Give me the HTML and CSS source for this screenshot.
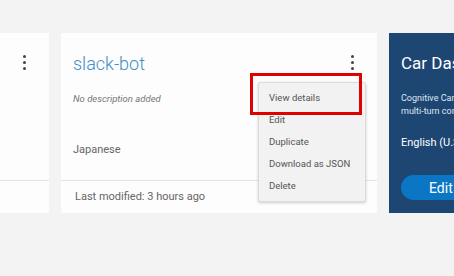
FILE: index.html
```html
<!DOCTYPE html>
<html lang="en">
<head>
    <meta charset="UTF-8">
    <title>Workspaces</title>
    <link rel="stylesheet" href="styles.css">
</head>
<body>
    <div class="row">
        <div class="card">
            <div class="card-body">
                <div class="card-head">
                    <span class="title"></span>
                    <span class="kebab"><i></i><i></i><i></i></span>
                </div>
            </div>
            <div class="card-foot"></div>
        </div>

        <div class="card">
            <div class="card-body">
                <div class="card-head">
                    <span class="title">slack-bot</span>
                    <span class="kebab"><i></i><i></i><i></i></span>
                </div>
                <p class="desc">No description added</p>
                <p class="lang">Japanese</p>
            </div>
            <div class="card-foot">Last modified: 3 hours ago</div>

            <ul class="menu">
                <li>View details</li>
                <li>Edit</li>
                <li>Duplicate</li>
                <li>Download as JSON</li>
                <li>Delete</li>
            </ul>
            <div class="highlight"></div>
        </div>

        <div class="card dark">
            <div class="card-body">
                <div class="card-head">
                    <span class="title">Car Dashboard - Sample</span>
                </div>
                <p class="desc">Cognitive Car Dashboard sample: a multi-turn conversation</p>
                <p class="lang">English (U.S.)</p>
                <button class="edit">Edit</button>
            </div>
        </div>
    </div>
</body>
</html>
```

FILE: styles.css
```css
body {
    margin: 0;
    background: #f3f3f3;
    font-family: Roboto, "Liberation Sans", sans-serif;
    overflow: hidden;
}
.row {
    display: flex;
    gap: 12px;
    margin-left: -267px;
    padding-top: 33px;
}
.card {
    position: relative;
    flex: 0 0 316px;
    height: 180px;
    background: #fdfdfd;
    display: flex;
    flex-direction: column;
}
.card-body {
    height: 147px;
    padding: 0 12px;
    border-bottom: 1px solid #e4e4e4;
}
.card-head {
    display: flex;
    justify-content: space-between;
    align-items: flex-start;
    height: 44px;
    padding-top: 20px;
    box-sizing: border-box;
}
.title {
    font-size: 18px;
    font-weight: 300;
    color: #3f8fc4;
}
.kebab {
    display: flex;
    flex-direction: column;
    gap: 3px;
    margin: 2px 11px 0 0;
}
.kebab i {
    width: 3px;
    height: 3px;
    border-radius: 50%;
    background: #444;
}
.desc {
    margin: 16px 0 0;
    font-size: 9.5px;
    font-style: italic;
    color: #777;
}
.lang {
    margin: 39px 0 0;
    font-size: 11px;
    color: #666;
}
.card-foot {
    padding: 9px 14px;
    font-size: 11px;
    color: #666;
}
.menu {
    position: absolute;
    left: 197px;
    top: 49px;
    width: 106px;
    margin: 0;
    padding: 4px 0;
    list-style: none;
    background: #f2f2f2;
    border: 1px solid #dcdcdc;
    border-radius: 2px;
    box-shadow: 0 1px 3px rgba(0,0,0,0.2);
}
.menu li {
    height: 22px;
    line-height: 22px;
    padding-left: 10px;
    font-size: 9.5px;
    color: #555;
}
.highlight {
    position: absolute;
    left: 189px;
    top: 40px;
    width: 106px;
    height: 36px;
    border: 3px solid #e00000;
}
.dark {
    background: #1d4673;
}
.dark .card-body {
    border: none;
    height: auto;
}
.dark .title {
    color: #fff;
    font-weight: 400;
    font-size: 17px;
    white-space: nowrap;
}
.dark .desc {
    font-style: normal;
    color: #dfe7f0;
    font-size: 9px;
    line-height: 13px;
    width: 160px;
    margin-top: 15px;
}
.dark .lang {
    color: #fff;
    margin-top: 18px;
}
.edit {
    display: block;
    margin-top: 26px;
    width: 160px;
    height: 25px;
    border: none;
    border-radius: 13px;
    background: #0b76c4;
    color: #fff;
    font-family: inherit;
    font-size: 14px;
    text-align: left;
    padding-left: 28px;
}
```
